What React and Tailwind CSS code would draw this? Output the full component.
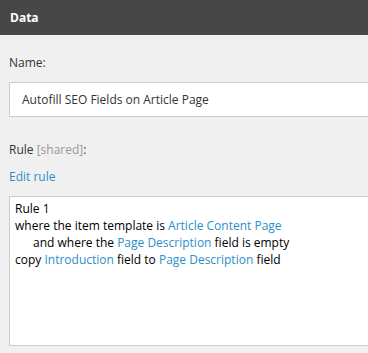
export default function App() {
  const link = "text-[#2b8fc8]";
  return (
    <div className="w-[368px] h-[353px] overflow-hidden bg-[#f0f0f0] text-[12px] leading-[17px] text-[#333]" style={{ fontFamily: '"Open Sans", "Noto Sans", sans-serif' }}>
      <div className="h-[35px] bg-[#474747] px-[10px] flex items-center">
        <span className="text-white font-bold text-[12px]">Data</span>
      </div>
      <div className="pl-[9px]">
        <div className="mt-[19px]">Name:</div>
        <div className="mt-[11px] w-[420px] h-[35px] bg-white border border-[#cccccc] flex items-center pl-[12px]">
          Autofill SEO Fields on Article Page
        </div>
        <div className="mt-[24px]">
          Rule <span className="text-[#999]">[shared]</span>:
        </div>
        <div className={`mt-[10px] ${link}`}>Edit rule</div>
        <div className="mt-[11px] w-[420px] h-[150px] bg-white border border-[#cccccc] px-[5px] pt-[3px] text-black">
          <div>Rule 1</div>
          <div>
            where the item template is <span className={link}>Article Content Page</span>
          </div>
          <div className="pl-[18px]">
            and where the <span className={link}>Page Description</span> field is empty
          </div>
          <div>
            copy <span className={link}>Introduction</span> field to <span className={link}>Page Description</span> field
          </div>
        </div>
      </div>
    </div>
  );
}
